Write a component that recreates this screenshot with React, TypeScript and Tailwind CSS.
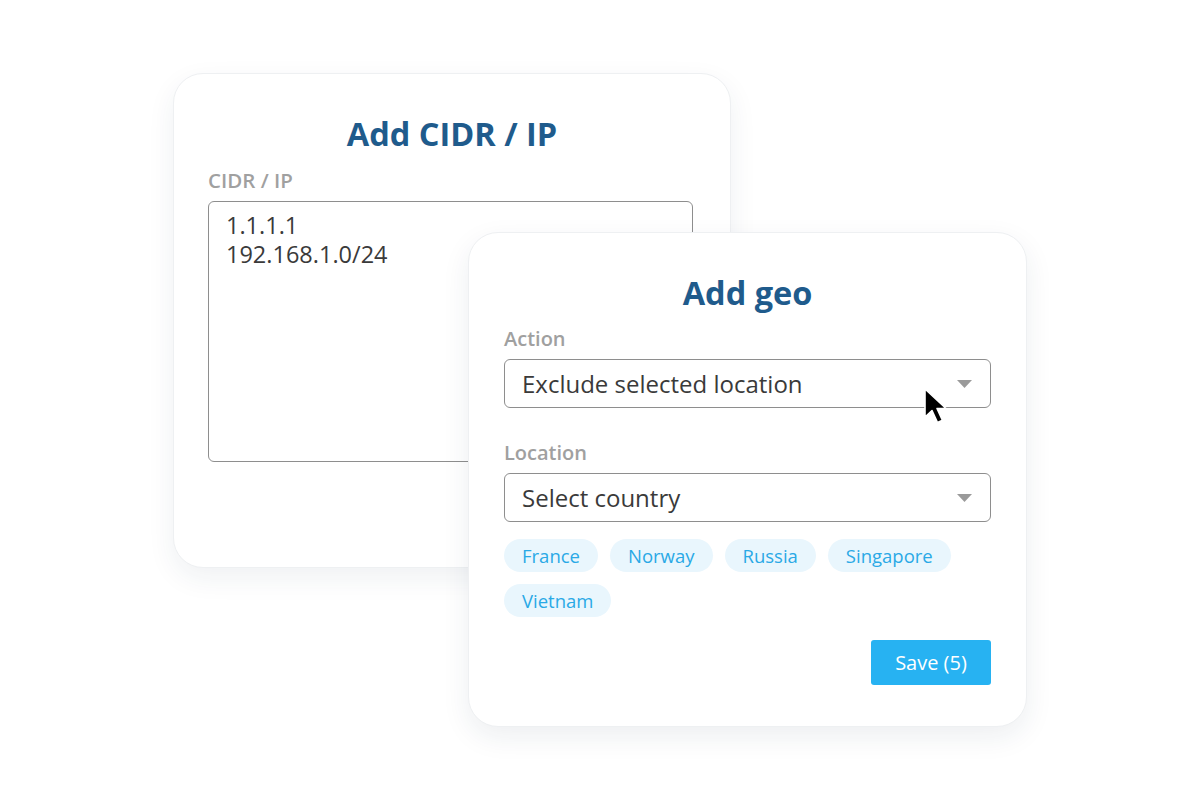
import React from "react";

const font = { fontFamily: '"Open Sans", "Noto Sans", Arial, sans-serif' };

function Caret() {
  return <svg width="15" height="8" viewBox="0 0 15 8" className="shrink-0"><path d="M0 0h15L7.5 8z" fill="#9a9a9a" /></svg>;
}

function Select({ value }: { value: string }) {
  return <div className="flex h-[49px] items-center justify-between rounded-[6px] border-[1.5px] border-[#8e8e8e] pl-[17px] pr-[18px]">
    <span className="text-[24px] leading-none text-[#3a3a3a]">{value}</span>
    <Caret />
  </div>;
}

function Cursor() {
  return <svg width="26" height="38" viewBox="0 0 26 38" className="absolute left-[922px] top-[387px]">
    <path d="M3 2v28l7-6.5 5.5 12 5-2.2-5.5-11.8H24z" fill="#000" stroke="#fff" strokeWidth="1.6" strokeLinejoin="round" />
  </svg>;
}

const countries = ["France", "Norway", "Russia", "Singapore", "Vietnam"];

export default function App() {
  return <div style={font} className="relative h-[800px] w-[1200px] overflow-hidden bg-white">
    <section className="absolute left-[173px] top-[73px] flex h-[495px] w-[558px] flex-col rounded-[30px] border border-[#eef0f2] bg-white pl-[34px] pr-[37px] pt-[39px] shadow-[0_10px_28px_rgba(30,50,80,0.07)]">
      <h2 className="pl-[3px] text-center text-[32.5px] font-bold leading-[42px] text-[#1f5b8c]">Add CIDR / IP</h2>
      <label className="mt-[13px] text-[20.5px] font-semibold leading-[24px] text-[#a0a0a0]">CIDR / IP</label>
      <div className="mt-[9px] flex h-[261px] flex-col gap-[1px] rounded-[6px] border-[1.5px] border-[#8e8e8e] px-[17px] pt-[9px] text-[23.5px] leading-[28px] text-[#3a3a3a]">
        <div>1.1.1.1</div>
        <div>192.168.1.0/24</div>
      </div>
    </section>

    <section className="absolute left-[468px] top-[232px] flex h-[495px] w-[559px] flex-col rounded-[30px] border border-[#eef0f2] bg-white px-[35px] pt-[39px] shadow-[0_10px_28px_rgba(30,50,80,0.08)]">
      <h2 className="text-center text-[32.5px] font-bold leading-[42px] text-[#1f5b8c]">Add geo</h2>
      <label className="mt-[13px] text-[20px] font-semibold leading-[24px] text-[#a0a0a0]">Action</label>
      <div className="mt-[8px]"><Select value="Exclude selected location" /></div>
      <label className="mt-[33px] text-[20px] font-semibold leading-[24px] text-[#a0a0a0]">Location</label>
      <div className="mt-[8px]"><Select value="Select country" /></div>
      <div className="mt-[17px] flex flex-wrap gap-x-[12px] gap-y-[12px]">
        {countries.map(c => <span key={c} className="flex h-[33px] items-center rounded-full bg-[#e9f6fd] px-[18px] text-[18.5px] text-[#2aa9e6]">{c}</span>)}
      </div>
      <div className="mt-[23px] flex justify-end">
        <button className="h-[45px] w-[120px] rounded-[3px] bg-[#27b2f2] text-[20px] text-white">Save (5)</button>
      </div>
    </section>

    <Cursor />
  </div>;
}
